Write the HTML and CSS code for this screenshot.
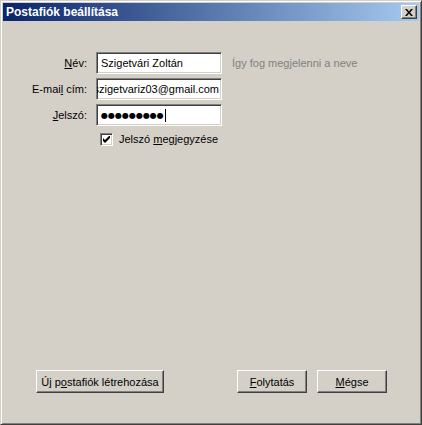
FILE: index.html
```html
<!DOCTYPE HTML>
<html lang="hu">
<head>
    <meta charset="utf-8" />
    <title>Postafiók beállítása</title>
    <link rel="stylesheet" href="styles.css">
</head>
<body>
    <div class="window">
        <div class="titlebar">
            <span class="title">Postafiók beállítása</span>
            <span class="close-btn">
                <svg width="8" height="7" viewBox="0 0 8 7">
                    <path d="M0 0h2l2 2.5L6 0h2L5 3.5 8 7H6L4 4.5 2 7H0l3-3.5z" fill="#000"/>
                </svg>
            </span>
        </div>
        <div class="body">
            <div class="form">
                <label class="label"><u>N</u>év:</label>
                <div class="field">Szigetvári Zoltán</div>
                <span class="hint">Így fog megjelenni a neve</span>

                <label class="label">E-mai<u>l</u> cím:</label>
                <div class="field field-end">szigetvariz03@gmail.com</div>
                <span></span>

                <label class="label"><u>J</u>elszó:</label>
                <div class="field"><span class="dots">●●●●●●●●●</span><span class="caret"></span></div>
                <span></span>

                <span></span>
                <div class="check-row">
                    <span class="checkbox">
                        <svg width="7" height="7" viewBox="0 0 7 7">
                            <path d="M0 2v3l2 2 5-5V-1L2 4z" fill="#000"/>
                        </svg>
                    </span>
                    <span>Jelszó <u>m</u>egjegyzése</span>
                </div>
                <span></span>
            </div>
            <div class="buttons">
                <button class="btn btn-wide">Új p<u>o</u>stafiók létrehozása</button>
                <div class="right-buttons">
                    <button class="btn"><u>F</u>olytatás</button>
                    <button class="btn"><u>M</u>égse</button>
                </div>
            </div>
        </div>
    </div>
</body>
</html>
```

FILE: styles.css
```css
html, body {
    margin: 0;
    padding: 0;
    background: #d4d0c8;
}

body {
    font-family: "Liberation Sans", Arial, sans-serif;
    font-size: 11px;
    color: #000;
}

.window {
    box-sizing: border-box;
    width: 422px;
    height: 425px;
    border: 1px solid;
    border-color: #d4d0c8 #404040 #404040 #d4d0c8;
    box-shadow: inset 1px 1px #fff, inset -1px -1px #808080;
    padding: 2px;
    display: flex;
    flex-direction: column;
}

.titlebar {
    height: 18px;
    display: flex;
    align-items: center;
    justify-content: space-between;
    background: linear-gradient(to right, #0a246a 0%, #a6caf0 100%);
    padding: 0 2px 0 3px;
}

.title {
    color: #fff;
    font-weight: bold;
    font-size: 12px;
}

.close-btn {
    box-sizing: border-box;
    width: 16px;
    height: 14px;
    background: #d4d0c8;
    border: 1px solid;
    border-color: #fff #404040 #404040 #fff;
    box-shadow: inset -1px -1px #808080;
    display: flex;
    align-items: center;
    justify-content: center;
}

.body {
    flex: 1;
    display: flex;
    flex-direction: column;
}

.form {
    display: grid;
    grid-template-columns: 62px 126px auto;
    column-gap: 9px;
    row-gap: 4px;
    align-items: center;
    margin: 31px 0 0 22px;
}

.label {
    text-align: right;
}

.field {
    box-sizing: border-box;
    height: 22px;
    background: #fff;
    border: 1px solid;
    border-color: #808080 #fff #fff #808080;
    box-shadow: inset 1px 1px #404040, inset -1px -1px #d4d0c8;
    padding: 0 4px;
    display: flex;
    align-items: center;
    white-space: nowrap;
    overflow: hidden;
}

.field-end {
    justify-content: flex-end;
    padding-right: 2px;
}

.dots {
    font-family: "DejaVu Sans", sans-serif;
    font-size: 8px;
}

.caret {
    display: inline-block;
    width: 1px;
    height: 13px;
    background: #000;
    margin-left: 1px;
}

.hint {
    color: #808080;
    padding-left: 1px;
}

.check-row {
    display: flex;
    align-items: center;
    gap: 6px;
    padding-left: 4px;
    margin-top: 1px;
    height: 16px;
}

.checkbox {
    box-sizing: border-box;
    width: 13px;
    height: 13px;
    background: #fff;
    border: 1px solid;
    border-color: #808080 #fff #fff #808080;
    box-shadow: inset 1px 1px #404040, inset -1px -1px #d4d0c8;
    display: flex;
    align-items: center;
    justify-content: center;
}

.buttons {
    margin-top: auto;
    margin-bottom: 29px;
    display: flex;
    justify-content: space-between;
    padding: 0 32px 0 33px;
}

.right-buttons {
    display: flex;
    gap: 10px;
}

.btn {
    box-sizing: border-box;
    height: 23px;
    width: 70px;
    font-family: "Liberation Sans", Arial, sans-serif;
    font-size: 11px;
    color: #000;
    background: #d4d0c8;
    border: 1px solid;
    border-color: #fff #404040 #404040 #fff;
    box-shadow: inset -1px -1px #808080;
    padding: 0;
}

.btn-wide {
    width: 128px;
}
```
